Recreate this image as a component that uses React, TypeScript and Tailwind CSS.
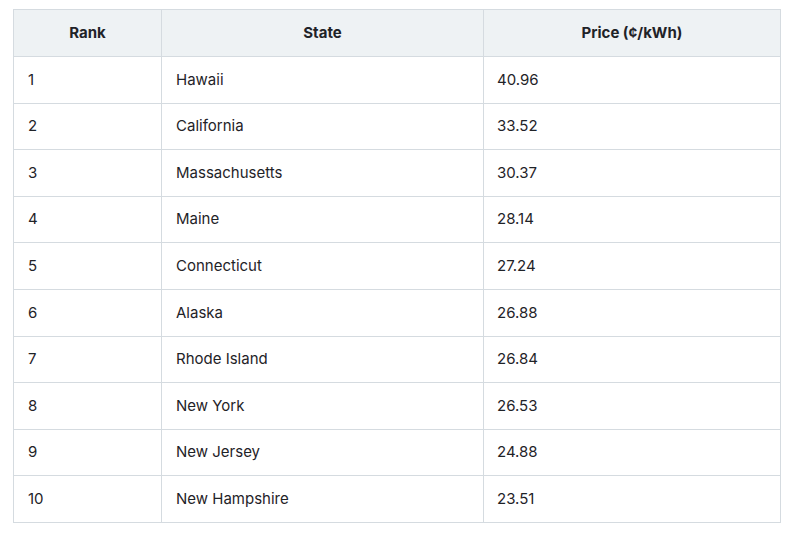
import React from "react";

const rows: [string, string, string][] = [
  ["1", "Hawaii", "40.96"],
  ["2", "California", "33.52"],
  ["3", "Massachusetts", "30.37"],
  ["4", "Maine", "28.14"],
  ["5", "Connecticut", "27.24"],
  ["6", "Alaska", "26.88"],
  ["7", "Rhode Island", "26.84"],
  ["8", "New York", "26.53"],
  ["9", "New Jersey", "24.88"],
  ["10", "New Hampshire", "23.51"],
];

export default function App() {
  return (
    <div className="w-[787px] h-[533px] bg-white pt-[9px] pl-[13px]" style={{ fontFamily: "Inter, 'Noto Sans', sans-serif" }}>
      <table className="border-collapse table-fixed w-[767px] text-[15px] text-[#1f2328]">
        <colgroup>
          <col className="w-[148px]" />
          <col className="w-[322px]" />
          <col className="w-[297px]" />
        </colgroup>
        <thead>
          <tr className="h-[47px] bg-[#eef2f4]">
            <th className="border border-[#d5dbe0] font-bold text-center">Rank</th>
            <th className="border border-[#d5dbe0] font-bold text-center">State</th>
            <th className="border border-[#d5dbe0] font-bold text-center">Price (¢/kWh)</th>
          </tr>
        </thead>
        <tbody>
          {rows.map((r) => (
            <tr key={r[0]} className="h-[46.6px]">
              <td className="border border-[#d5dbe0] pl-[14px]">{r[0]}</td>
              <td className="border border-[#d5dbe0] pl-[14px]">{r[1]}</td>
              <td className="border border-[#d5dbe0] pl-[13px]">{r[2]}</td>
            </tr>
          ))}
        </tbody>
      </table>
    </div>
  );
}
